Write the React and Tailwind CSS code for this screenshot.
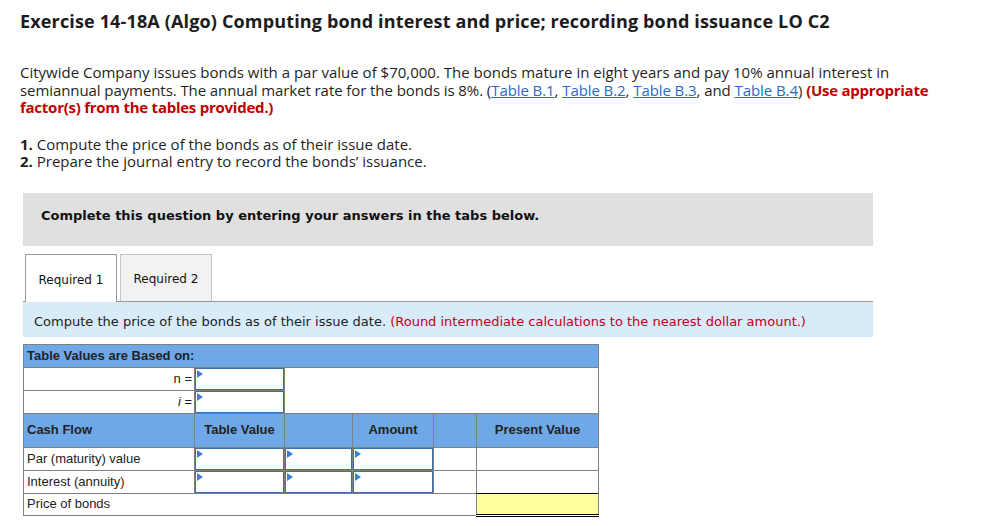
import React from "react";

const Tri = () => (
  <span className="absolute left-[1px] top-[1px] w-0 h-0 border-t-[4px] border-b-[4px] border-l-[6px] border-t-transparent border-b-transparent border-l-[#3b7fd4]" />
);

const InputCell = () => (
  <td className="border border-[#808080] p-0 h-[23px]">
    <div className="relative h-[22px] bg-white border border-[#3a6fb0]">
      <Tri />
    </div>
  </td>
);

const App = () => {
  const link = "text-[#2a6ac8] underline";
  return (
    <div className="w-[998px] h-[526px] bg-white overflow-hidden text-[#1f1f1f] font-['Open_Sans','Noto_Sans',sans-serif]">
      <div className="pl-5 pt-[10px]">
        <h1 className="text-[18px] leading-[22px] font-bold text-[#1c1c1c] tracking-[0.15px]">
          Exercise 14-18A (Algo) Computing bond interest and price; recording bond issuance LO C2
        </h1>
        <p className="mt-[32px] text-[15px] leading-[17.5px] whitespace-nowrap">
          Citywide Company issues bonds with a par value of $70,000. The bonds mature in eight years and pay 10% annual interest in
          <br />
          <span className="tracking-[-0.08px]">
            semiannual payments. The annual market rate for the bonds is 8%. (<span className={link}>Table B.1</span>,{" "}
            <span className={link}>Table B.2</span>, <span className={link}>Table B.3</span>, and{" "}
            <span className={link}>Table B.4</span>)
          </span>{" "}
          <span className="font-bold text-[#c00000] tracking-[-0.25px]">(Use appropriate</span>
          <br />
          <span className="font-bold text-[#c00000] tracking-[-0.25px]">factor(s) from the tables provided.)</span>
        </p>
        <div className="mt-[19px] text-[15px] leading-[17.5px]">
          <div>
            <span className="font-bold">1.</span> Compute the price of the bonds as of their issue date.
          </div>
          <div>
            <span className="font-bold">2.</span> Prepare the journal entry to record the bonds’ issuance.
          </div>
        </div>
      </div>

      <div className="ml-[23px] w-[850px] mt-[22px] font-['DejaVu_Sans',Verdana,sans-serif]">
        <div className="h-[53px] bg-[#e0e0e0] pl-[18px] pt-[13px] text-[13px] font-bold text-[#111]">
          Complete this question by entering your answers in the tabs below.
        </div>

        <div className="mt-[8px] flex pl-[2px] gap-[3px] h-[47px]">
          <div className="w-[92px] bg-white border border-b-0 border-[#999] flex items-center justify-center pt-[3px] text-[12px] text-[#111] relative z-10 h-[48px]">
            Required 1
          </div>
          <div className="w-[92px] bg-[#f2f2f2] border border-b-0 border-[#c4c4c4] flex items-center justify-center pt-[3px] text-[12px] text-[#111]">
            Required 2
          </div>
        </div>

        <div className="h-[36px] bg-[#d8ebf9] border-t border-[#999] pl-[11px] pt-[5px] flex items-center text-[13px] text-[#222]">
          <span>
            Compute the price of the bonds as of their issue date.{" "}
            <span className="text-[#c0001a]">(Round intermediate calculations to the nearest dollar amount.)</span>
          </span>
        </div>

        <table className="mt-[7px] table-fixed border-collapse w-[575px] font-['Liberation_Sans',Arial,sans-serif] text-[13px] text-[#222]">
          <colgroup>
            <col className="w-[171px]" />
            <col className="w-[90px]" />
            <col className="w-[68px]" />
            <col className="w-[81px]" />
            <col className="w-[43px]" />
            <col className="w-[122px]" />
          </colgroup>
          <tbody>
            <tr className="h-[23px] bg-[#6fa8e6]">
              <td colSpan={6} className="border border-[#808080] px-[3px] font-bold">
                Table Values are Based on:
              </td>
            </tr>
            <tr className="h-[23px]">
              <td className="border border-[#808080] text-right pr-[2px]">n =</td>
              <InputCell />
              <td rowSpan={2} colSpan={4} className="border border-[#808080]" />
            </tr>
            <tr className="h-[23px]">
              <td className="border border-[#808080] text-right pr-[2px]">
                <i>i</i> =
              </td>
              <InputCell />
            </tr>
            <tr className="h-[34px] bg-[#6fa8e6] font-bold">
              <td className="border border-[#808080] px-[3px]">Cash Flow</td>
              <td className="border border-[#808080] text-center">Table Value</td>
              <td className="border border-[#808080]" />
              <td className="border border-[#808080] text-center">Amount</td>
              <td className="border border-[#808080]" />
              <td className="border border-[#808080] text-center">Present Value</td>
            </tr>
            <tr className="h-[23px]">
              <td className="border border-[#808080] px-[3px]">Par (maturity) value</td>
              <InputCell />
              <InputCell />
              <InputCell />
              <td className="border border-[#808080]" />
              <td className="border border-[#808080]" />
            </tr>
            <tr className="h-[23px]">
              <td className="border border-[#808080] px-[3px]">Interest (annuity)</td>
              <InputCell />
              <InputCell />
              <InputCell />
              <td className="border border-[#808080]" />
              <td className="border border-[#808080]" />
            </tr>
            <tr className="h-[22px]">
              <td colSpan={5} className="border border-[#808080] px-[3px]">Price of bonds</td>
              <td className="border-t border-t-black border-b-[3px] border-b-black border-double border-l border-l-[#808080] border-r border-r-[#808080] bg-[#ffff9e]" />
            </tr>
          </tbody>
        </table>
      </div>
    </div>
  );
};

export default App;
